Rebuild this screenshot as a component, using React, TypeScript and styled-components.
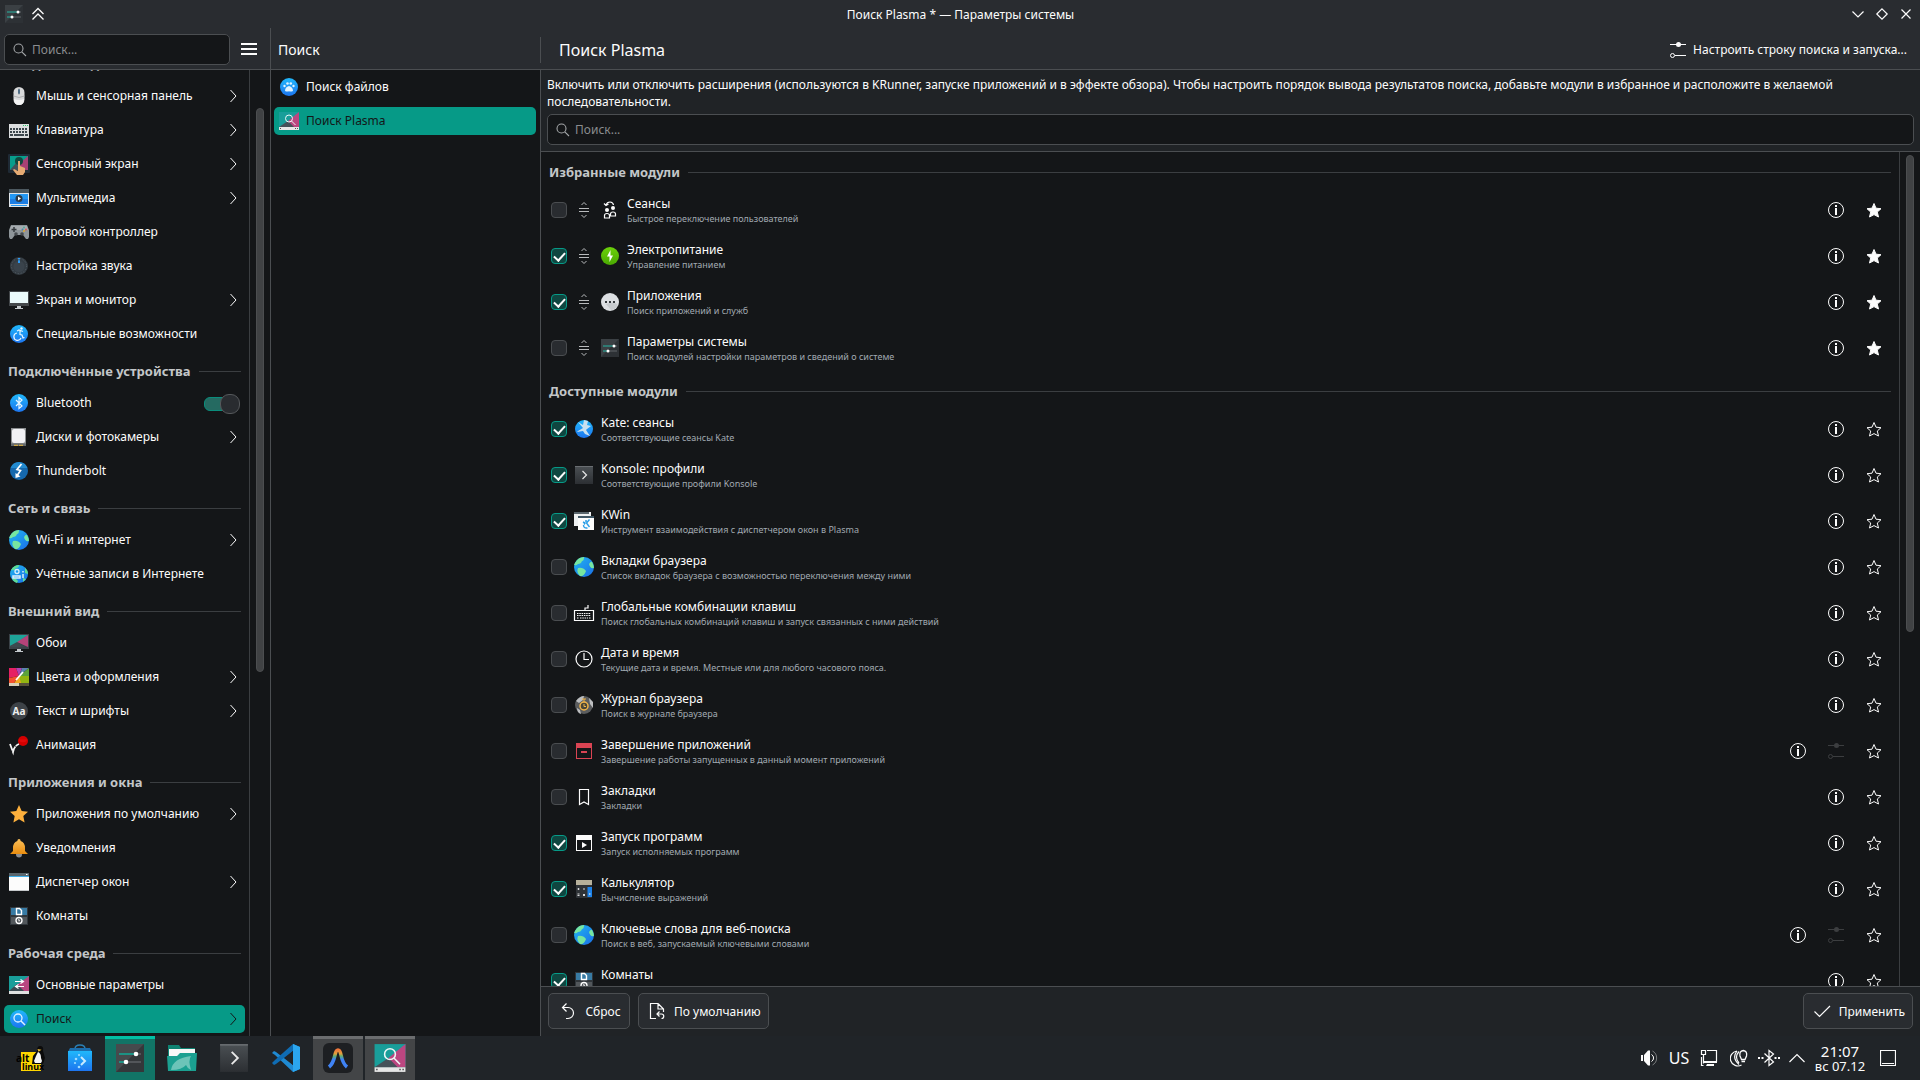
import React, { useState } from 'react';
import styled, { createGlobalStyle, css } from 'styled-components';

const c = {
  header: '#292c30',
  window: '#202326',
  view: '#141618',
  line: '#4b4e51',
  soft: '#3b3e41',
  text: '#fcfcfc',
  dim: '#a1a9b1',
  heading: '#c3c6c8',
  accent: '#069a87',
};

const GlobalStyle = createGlobalStyle`
  * { box-sizing: border-box; }
  body {
    margin: 0;
    background: ${c.window};
    color: ${c.text};
    font: 12px/17px "Noto Sans", "Open Sans", sans-serif;
    overflow: hidden;
  }
  ul { list-style: none; margin: 0; padding: 0; }
  h1, h2, h3, p { margin: 0; font: inherit; }
  button, input { font: inherit; color: inherit; }
  a { color: inherit; text-decoration: none; }
  svg { display: block; flex: none; }
`;

/* ---------- layout ---------- */

const Screen = styled.div`
  height: 100vh;
  display: flex;
  flex-direction: column;
`;

const TitleBar = styled.header`
  display: grid;
  grid-template-columns: 1fr auto 1fr;
  align-items: center;
  height: 28px;
  flex: none;
  padding: 0 2px 0 3px;
  background: ${c.header};
`;

const TitleLeft = styled.div`
  display: flex;
  align-items: center;
  gap: 5px;
`;

const TitleRight = styled.div`
  display: flex;
  justify-content: flex-end;
`;

const TitleText = styled.h1``;

const FlatButton = styled.button<{ $size: number }>`
  display: flex;
  align-items: center;
  justify-content: center;
  width: ${p => p.$size}px;
  height: ${p => p.$size}px;
  padding: 0;
  border: 0;
  border-radius: 4px;
  background: transparent;
`;

const Body = styled.div`
  flex: 1;
  min-height: 0;
  display: flex;
`;

const SideColumn = styled.section`
  flex: none;
  width: 271px;
  display: flex;
  flex-direction: column;
  border-right: 1px solid ${c.line};
  background: ${c.view};
`;

const SubColumn = styled(SideColumn)`
  width: 269px;
  border-right: 0;
`;

const MainColumn = styled.main`
  flex: 1;
  min-width: 0;
  display: flex;
  flex-direction: column;
`;

const Bar = styled.div`
  flex: none;
  display: flex;
  align-items: center;
  height: 42px;
  padding: 2px 5px 0 4px;
  gap: 3px;
  background: ${c.header};
  border-bottom: 1px solid ${c.line};
`;

const SubTitle = styled.h2`
  padding: 0 3px;
  font-size: 14px;
`;

const MainBar = styled(Bar)`
  padding: 2px 8px 0 0;
  justify-content: space-between;
`;

const MainTitle = styled.h2`
  padding: 0 18px;
  border-left: 1px solid ${c.line};
  font-size: 16px;
  line-height: 26px;
`;

const ToolButton = styled.button`
  display: flex;
  align-items: center;
  gap: 7px;
  height: 32px;
  padding: 0 5px;
  border: 0;
  background: transparent;
`;

const SearchBox = styled.label`
  flex: 1;
  display: flex;
  align-items: center;
  gap: 4px;
  height: 31px;
  padding: 0 7px;
  border: 1px solid ${c.line};
  border-radius: 5px;
  background: ${c.view};
`;

const SearchInput = styled.input`
  flex: 1;
  min-width: 0;
  padding: 0;
  border: 0;
  outline: 0;
  background: transparent;
  &::placeholder { color: #8a8d8f; opacity: 1; }
`;

const Scroller = styled.div`
  flex: 1;
  min-height: 0;
  display: flex;
  background: ${c.view};
`;

const ScrollContent = styled.div<{ $end?: boolean }>`
  flex: 1;
  min-width: 0;
  overflow: hidden;
  display: flex;
  flex-direction: column;
  justify-content: ${p => (p.$end ? 'flex-end' : 'flex-start')};
`;

const ScrollTrack = styled.div<{ $before: number; $handle: number; $after: number }>`
  flex: none;
  width: 21px;
  padding: 3px 6px;
  border-left: 1px solid ${c.soft};
  display: grid;
  grid-template-rows: ${p => `${p.$before}fr ${p.$handle}fr ${p.$after}fr`};
`;

const ScrollHandle = styled.div`
  grid-row: 2;
  width: 8px;
  border-radius: 4px;
  background: #404244;
  border: 1px solid #4c4e50;
`;

const GroupTitle = styled.h3`
  flex: none;
  display: flex;
  align-items: center;
  gap: 8px;
  height: 35px;
  padding: 6px 8px 0;
  color: ${c.heading};
  font-size: 13px;
  font-weight: 700;
  &::after {
    content: '';
    flex: 1;
    height: 1px;
    background: ${c.soft};
  }
`;

const NavList = styled.ul<{ $inset?: number }>`
  flex: none;
  padding: 0 4px 0 ${p => p.$inset ?? 4}px;
`;

const NavRow = styled.li<{ $active?: boolean }>`
  display: flex;
  align-items: center;
  height: 28px;
  margin: 3px 0 6px;
  &:last-child { margin-bottom: 3px; }
  padding: 0 4px;
  border-radius: 5px;
  ${p => p.$active && css`background: ${c.accent}; color: ${c.view};`}
`;

const NavLink = styled.a`
  flex: 1;
  display: flex;
  align-items: center;
  gap: 6px;
  white-space: nowrap;
`;

const NavLabel = styled.span`
  flex: 1;
  padding-bottom: 2px;
`;

const Toggle = styled.input`
  appearance: none;
  display: grid;
  align-items: center;
  width: 36px;
  height: 18px;
  margin: 0 1px 0 0;
  &::before, &::after { content: ''; grid-area: 1 / 1; }
  &::before {
    width: 32px;
    height: 12px;
    border: 1px solid #0a8d7c;
    border-radius: 6px;
    background: #256a61;
  }
  &::after {
    justify-self: end;
    width: 18px;
    height: 18px;
    border: 1px solid #55585b;
    border-radius: 9px;
    background: #292c30;
  }
`;

const Intro = styled.div`
  flex: none;
  display: flex;
  flex-direction: column;
  gap: 4px;
  padding: 6px;
  border-bottom: 1px solid ${c.line};
  background: ${c.window};
`;

const IntroSearch = styled(SearchBox)`
  flex: none;
`;

const Framed = styled.div`
  flex: 1;
  min-height: 0;
  display: flex;
  flex-direction: column;
  border-left: 1px solid ${c.line};
`;

const ModuleRow = styled.li`
  display: flex;
  align-items: center;
  gap: 6px;
  height: 46px;
  padding: 0 8px 0 10px;
`;

const Check = styled.input`
  appearance: none;
  flex: none;
  display: grid;
  justify-content: center;
  width: 16px;
  height: 16px;
  margin: 0;
  border: 1px solid #4a4d50;
  border-radius: 4px;
  background: #292c30;
  &:checked {
    border-color: ${c.accent};
    background: #0f4640;
  }
  &:checked::after {
    content: '';
    width: 5px;
    height: 9px;
    margin-top: 1px;
    border: solid ${c.text};
    border-width: 0 2px 2px 0;
    transform: rotate(42deg);
  }
`;

const ModuleText = styled.label`
  flex: 1;
  display: flex;
  flex-direction: column;
  padding-top: 1px;
`;

const ModuleSub = styled.span`
  font-size: 9px;
  line-height: 14px;
  color: ${c.dim};
`;

const Actions = styled.div`
  display: flex;
  gap: 4px;
`;

const Footer = styled.footer`
  flex: none;
  display: flex;
  gap: 8px;
  height: 50px;
  padding: 6px 7px;
  border-top: 1px solid ${c.line};
  background: ${c.window};
`;

const PushButton = styled.button<{ $right?: boolean }>`
  display: flex;
  align-items: center;
  justify-content: center;
  gap: 6px;
  min-width: 82px;
  height: 36px;
  padding: 0 7px;
  margin-left: ${p => (p.$right ? 'auto' : '0')};
  border: 1px solid ${c.line};
  border-radius: 5px;
  background: ${c.header};
`;

const Panel = styled.nav`
  flex: none;
  display: flex;
  justify-content: space-between;
  height: 44px;
  padding-left: 5px;
  background: #202428;
`;

const Tasks = styled.div`
  display: flex;
  gap: 2px;
`;

const Task = styled.button<{ $state?: 'active' | 'open'; $narrow?: boolean }>`
  display: flex;
  align-items: center;
  justify-content: center;
  width: ${p => (p.$narrow ? 46 : 50)}px;
  padding: 0;
  border: 0;
  border-top: 3px solid transparent;
  border-bottom: 3px solid transparent;
  background: transparent;
  ${p => p.$state === 'active' && css`background: #117466; border-color: #02bfa4 transparent #117466;`}
  ${p => p.$state === 'open' && css`background: #434547; border-color: #6b6d6f transparent #434547;`}
`;

const Tray = styled.div`
  display: flex;
  align-items: center;
  padding-right: 17px;
`;

const TrayButton = styled(FlatButton)`
  font-size: 16px;
`;

const Clock = styled.time`
  width: 60px;
  margin-right: 3px;
  display: flex;
  flex-direction: column;
  align-items: center;
  font-size: 13px;
  line-height: 14px;
`;

const ClockTime = styled.span`
  font-size: 15px;
  line-height: 16px;
`;

/* ---------- icons ---------- */

const Defs = styled.svg`
  position: absolute;
  width: 0;
  height: 0;
`;

const Gradients = () => (
  <Defs aria-hidden="true">
    <defs>
      <linearGradient id="blue" x1="0" y1="0" x2="0" y2="1"><stop offset="0" stopColor="#20b8fb" /><stop offset="1" stopColor="#1d75ef" /></linearGradient>
      <linearGradient id="ocean" x1="0" y1="0" x2="1" y2="1"><stop offset="0" stopColor="#21b6f0" /><stop offset="1" stopColor="#1a6fe8" /></linearGradient>
      <linearGradient id="green" x1="0" y1="0" x2="0" y2="1"><stop offset="0" stopColor="#6cd20a" /><stop offset="1" stopColor="#4aa902" /></linearGradient>
      <linearGradient id="slate" x1="0" y1="0" x2="0" y2="1"><stop offset="0" stopColor="#4b5054" /><stop offset="1" stopColor="#2c2f33" /></linearGradient>
      <linearGradient id="gold" x1="0" y1="0" x2="0" y2="1"><stop offset="0" stopColor="#fbc05a" /><stop offset="1" stopColor="#ea8d0f" /></linearGradient>
      <linearGradient id="rainbow" x1="0" y1="0" x2="0" y2="1"><stop offset="0" stopColor="#f0793b" /><stop offset=".22" stopColor="#e2a13c" /><stop offset=".36" stopColor="#5fae72" /><stop offset=".55" stopColor="#3f83f5" /><stop offset="1" stopColor="#3f83f5" /></linearGradient>
    </defs>
  </Defs>
);

const art: Record<string, React.ReactNode> = {
  mouse: <><rect x="5.500" y="2" width="11" height="18" rx="5.500" fill="#d9dadb" /><path d="M11 2v8M5.500 11q5.500 3 11 0" stroke="#aeb0b2" fill="none" /><rect x="10" y="4" width="2" height="5" rx="1" fill="#4f6d86" /><path d="M6 14q0 6 5 6t5-6q-5 2-10 0z" fill="#f4f4f4" /></>,
  keyboard: <><rect x="1" y="5" width="20" height="14" fill="#dcdedf" /><path d="M15 6.500h5" stroke="#31c86e" strokeDasharray="1 1" /><path d="M2 10h18M2 13h18" stroke="#3c464c" strokeWidth="2" strokeDasharray="2 1" /><path d="M2 16h3M6 16h10M17 16h3" stroke="#3c464c" strokeWidth="2" /></>,
  touch: <><rect x="0" y="1" width="22" height="19" rx="1" fill="#1f2a35" /><path d="M2 3h18v14H2z" fill="#079e8c" /><path d="M20 3v14h-6l-3-6z" fill="#a84075" /><path d="M2 17l6-7 5 7z" fill="#41525a" /><circle cx="11" cy="8" r="4" fill="#10493f" /><path d="M10 8h2v5l5 2v4l-2 3H9l-4-5 1-1 4 2z" fill="#e5aa73" /></>,
  media: <><rect x="1" y="2" width="20" height="18" fill="#dfe4e8" /><rect x="1" y="2" width="20" height="4" fill="#4d5960" /><rect x="2" y="7" width="18" height="10" fill="#2398f4" /><path d="M2 12h18v5H2z" fill="#1c7de2" /><circle cx="11" cy="11.500" r="3.500" fill="#2c3b48" /><path d="M10 9.500l3 2-3 2z" fill="#fff" /><path d="M3 18.500h16" stroke="#2398f4" /></>,
  gamepad: <><path d="M3 4h16l2 5v7l-1 2h-2l-3-4H7l-3 4H2l-1-2V9z" fill="#8e9599" /><path d="M3 5h16l1 4H2z" fill="#a7acb0" /><path d="M6 6v5M3.500 8.500h5" stroke="#363b3f" strokeWidth="1.500" /><circle cx="8" cy="13" r="1.800" fill="#454a4e" /><circle cx="14" cy="13" r="1.800" fill="#454a4e" /><circle cx="16" cy="6.500" r="1" fill="#5a9" /><circle cx="14.500" cy="8.500" r="1" fill="#48a" /><circle cx="18" cy="8.500" r="1" fill="#d55" /><circle cx="16" cy="10" r="1" fill="#da3" /></>,
  sound: <><circle cx="11" cy="11" r="9" fill="#343c43" /><circle cx="11" cy="11" r="7.500" fill="none" stroke="#566068" strokeDasharray="1 2" /><circle cx="11" cy="11.500" r="5.500" fill="#3a434b" /><path d="M11 3v5" stroke="#2d9bf5" strokeWidth="2" strokeDasharray="1.500 .8 3" /></>,
  screen: <><rect x="1" y="2" width="20" height="15" fill="#44484b" /><rect x="2" y="3" width="18" height="11" fill="#eafafb" /><path d="M9 17h4v2h2v1H7v-1h2z" fill="#c4c9cc" /></>,
  access: <><circle cx="11" cy="11" r="9" fill="url(#blue)" /><path d="M12 7v4.500l2 .5 1 3 1.500-.5M9 8l2-1 4 1.500M13 15a3.700 3.700 0 11-4-5" fill="none" stroke="#e8f6ff" strokeWidth="1.200" /><circle cx="13.500" cy="5.500" r="1.200" fill="#e8f6ff" /></>,
  bluetooth: <><circle cx="11" cy="11" r="9" fill="url(#blue)" /><path d="M8 8l6 6-3 2.500v-11L14 8l-6 6" fill="none" stroke="#e8f6ff" strokeWidth="1.200" /></>,
  disk: <><rect x="3" y="2" width="15" height="18" fill="#8b8e90" /><rect x="4" y="3" width="13" height="14" rx="2" fill="#f1f1f4" /><path d="M3 17.500h15v2.500H3z" fill="#63686b" /><path d="M6 19.300h10" stroke="#e7b53b" strokeDasharray="4 1" /></>,
  thunder: <><circle cx="11" cy="11" r="9" fill="#1568ad" /><path d="M2.500 8a9 9 0 0117 0z" fill="#238bd0" /><path d="M13.500 4L9 9.500l3.500 1-4 6" fill="none" stroke="#fff" strokeWidth="1.700" /><path d="M7.500 13v5l5-1.500z" fill="#fff" /></>,
  globe: <><circle cx="11" cy="11" r="10" fill="url(#ocean)" /><path d="M2 7q3-6 9-6 0 4-2 4-1 3-4 3-2 2-4 1zM5 12q5-1 8 3-2 6-6 5-4-4-2-8zM16 8q2-3 3-2 2 3 2 6-4 1-5-4z" fill="#77e6a0" /></>,
  accounts: <><circle cx="11" cy="11" r="9" fill="url(#ocean)" /><path d="M3 7q3-5 8-5 0 3-3 3-1 3-5 2zM4 15q4 0 6 3l-1 2q-4-1-5-5zM17 5q3 2 3 6l-3-1zM15 15l3 1-3 3z" fill="#5fdc94" /><circle cx="9" cy="8.500" r="2" fill="none" stroke="#dcf1fb" strokeWidth="1.300" /><path d="M5 15v-2h7v2zM15 11v4M15 8v1.500" fill="none" stroke="#dcf1fb" strokeWidth="1.500" /></>,
  wallpaper: <><rect x="1" y="2" width="20" height="15" fill="#3b4248" /><path d="M2 3h18L9 11 2 14z" fill="#1ea398" /><path d="M20 3v12L9 10z" fill="#b54379" /><path d="M2 14l7-4 8 5H2z" fill="#3e494f" /><path d="M9 17h4v2h2v1H7v-1h2z" fill="#c4c9cc" /></>,
  colors: <><path d="M1 2h7l3 8-10 2z" fill="#e62064" /><path d="M8 2h6l-3 8z" fill="#b046b5" /><path d="M14 2h7l-10 8z" fill="#5b83b0" /><path d="M21 2v8H11z" fill="#5ca23c" /><path d="M21 10v7H11l0-7z" fill="#93b512" /><path d="M11 10l2 7H6z" fill="#f2a820" /><path d="M1 12l10-2-5 7H1z" fill="#f4522f" /><path d="M15 6l-7 8" stroke="#fff" strokeWidth="1.800" /><path d="M1 17h20v3H1z" fill="#d8d0b8" /><path d="M11 17h10v3H11z" fill="#57513a" /></>,
  fonts: <><circle cx="11" cy="11" r="9" fill="#3d4247" /><text x="11" y="14.500" fontSize="10" fontWeight="700" textAnchor="middle" fill="#eceded">Aa</text></>,
  motion: <><circle cx="15" cy="7" r="5" fill="#d40000" /><path d="M10.500 5.500a5 5 0 009 0z" fill="#f01414" opacity=".5" /><path d="M2 10l3 8q1-6 6-8" fill="none" stroke="#f4f4f4" strokeWidth="1.800" strokeDasharray="7 .6" /></>,
  star: <path d="M11 2l2.700 6 6.300.7-4.700 4.300 1.300 6.500L11 16.300 5.400 19.500l1.300-6.500L2 8.700 8.300 8z" fill="#fdb03c" />,
  bell: <><circle cx="11" cy="17.500" r="3" fill="#8b8e92" /><path d="M11 2q1.500 0 1.700 2Q17 5.500 17 11v3l3 3H2l3-3v-3q0-5.500 4.300-7Q9.500 2 11 2z" fill="url(#gold)" /></>,
  windows: <><rect x="1" y="2" width="20" height="18" fill="#fcfcfc" /><rect x="1" y="2" width="20" height="4" fill="#59656c" /><path d="M1 5.500h20" stroke="#3daee9" /><path d="M1 19.500h20" stroke="#c5c8ca" /><path d="M18 3.500h1.500" stroke="#fff" /></>,
  activities: <><rect x="2" y="2" width="18" height="18" fill="#30363b" /><rect x="3" y="3" width="16" height="7" fill="#387ba4" /><rect x="3" y="12" width="16" height="7" fill="#52575b" /><path d="M8.500 3.500h3l2 2v4h-5z" fill="none" stroke="#fff" strokeWidth="1.400" /><circle cx="11" cy="15.500" r="3" fill="none" stroke="#fff" strokeWidth="1.300" /><path d="M10 14l2 1-1 2z" fill="#fff" /></>,
  general: <><path d="M1 2h20v15H1z" fill="#199e9a" /><path d="M21 2v15h-6l-6-6z" fill="#b94680" /><path d="M1 17l8-7 7 7z" fill="#3e4c54" /><path d="M1 17h20v3H1z" fill="#dfe0e0" /><path d="M7 7.500h8M8 12.500h8M12.500 5.500l3 2-3 2M10.500 10.500l-3 2 3 2" stroke="#fff" fill="none" strokeWidth="1.200" /></>,
  find: <><circle cx="11" cy="11" r="9" fill="url(#blue)" /><circle cx="10" cy="10" r="4" fill="none" stroke="#dff2ff" strokeWidth="1.300" /><path d="M13 13l4 4" stroke="#dff2ff" strokeWidth="1.400" /></>,
  paw: <><circle cx="11" cy="11" r="9" fill="url(#blue)" /><g fill="#e1f3fe"><path d="M11 10q4 1 4 5-2 1-4 .3-2 .7-4-.3 0-4 4-5z" /><circle cx="9.500" cy="7.500" r="1.300" /><circle cx="12.800" cy="7.500" r="1.300" /><circle cx="6.500" cy="10" r="1.200" /><circle cx="15.500" cy="10" r="1.200" /></g></>,
  plasma: <><path d="M1 2h20v15H1z" fill="#199e9a" /><path d="M21 2v15h-6l-5-6z" fill="#bb4680" /><path d="M1 17l9-6 6 6z" fill="#465159" /><path d="M1 17h20v3H1z" fill="#e7e7e7" /><path d="M2 18.500h1M17 18.500h3" stroke="#555" strokeDasharray="1 1" /><circle cx="11" cy="8.500" r="3.500" fill="none" stroke="#eef7f7" strokeWidth="1" /><path d="M13.500 11l4 4" stroke="#eef7f7" strokeWidth="1" /></>,
  settings: <><rect x="2" y="2" width="18" height="18" fill="#3b4044" /><path d="M2 20L20 2v18z" fill="#2d3135" /><path d="M4 9h14M4 14h14" stroke="#62676b" /><path d="M4 9h10M4 14h5" stroke="#12a18f" /><circle cx="15" cy="9" r="1.500" fill="#fff" /><circle cx="9" cy="14" r="1.500" fill="#fff" /></>,
  users: <g fill="#fcfcfc"><circle cx="8" cy="11" r="2" /><circle cx="14" cy="9" r="2" /><path d="M5.500 19v-2.500q0-2 2.500-2t2.500 2V19zM11.500 17v-2q0-2 2.500-2t2.500 2v2z" fill="none" stroke="#fcfcfc" strokeWidth="1.200" /><path d="M14.500 6Q14 3 11 3 8 3 7 6M5 4.500l2 2 2.500-1.500" fill="none" stroke="#fcfcfc" strokeWidth="1.200" /></g>,
  power: <><circle cx="11" cy="11" r="9" fill="url(#green)" /><path d="M11.500 5L8 11.500h2.500V17l3.500-6.500h-2.500z" fill="#fff" /></>,
  apps: <><circle cx="11" cy="11" r="9" fill="#dcdfe2" /><path d="M7 13l5 6 4-1 3-4-4-3z" fill="#c6cacd" /><path d="M6 11h2M10 11h2M14 11h2" stroke="#34393d" strokeWidth="2" /></>,
  kate: <><circle cx="11" cy="11" r="9" fill="url(#blue)" /><path d="M5 4l5 3 1-5 4 1-1 4 4 1-4 3-1 1 4 6-5-2-2-3-6 1 1-1 5-3z" fill="#c9e0ef" /></>,
  konsole: <><rect x="2" y="2" width="18" height="18" fill="url(#slate)" /><path d="M2 2.500h18" stroke="#6a6e72" /><path d="M9.500 7l4 4-4 4" fill="none" stroke="#e8e8e8" strokeWidth="1.200" /></>,
  kwin: <><rect x="1" y="2" width="17" height="14" fill="#eef0f1" /><path d="M1 3h15" stroke="#59656c" strokeWidth="2" /><rect x="5" y="6" width="16" height="14" fill="#fcfcfc" /><path d="M5 7h16" stroke="#3f5664" strokeWidth="2" /><path d="M16.500 9.500l-3 3.500 3 4M10 12l2 1-1 1.500M12 11h2M10.500 15q0 3.500 4 3" fill="none" stroke="#2b9fe8" strokeWidth="1.400" /></>,
  keys: <><path d="M1.500 8.500h19v10h-19zM12 8V6h3V3" fill="none" stroke="#fcfcfc" strokeWidth="1.200" /><path d="M4 11.500h14M4 13.500h14M4 16h2M7 16h8M16 16h2" stroke="#fcfcfc" strokeDasharray="1.500 .8" /></>,
  clock: <><circle cx="11" cy="11" r="8" fill="none" stroke="#fcfcfc" strokeWidth="1.200" /><path d="M11 5v6.500h5" fill="none" stroke="#fcfcfc" strokeWidth="1.200" /></>,
  history: <><circle cx="11" cy="11" r="9" fill="#5a5c5e" /><path d="M3 7q4-5 8-5l-1 4-4 3zM16 4l4 4v6l-3-4zM4 14l3 2 1 4q-4-1-4-6z" fill="#bcbec0" /><circle cx="11" cy="12" r="4" fill="#4a4638" stroke="#f0b44a" strokeWidth="1.500" /><path d="M11 8V5M9 5h4M11 10v2.500h2" stroke="#f0b44a" fill="none" /></>,
  kill: <g fill="#da4453"><path d="M3 3h16v16H3zM4 8v10h14V8z" fillRule="evenodd" /><path d="M8 11h6v2H8z" /></g>,
  bookmark: <path d="M6.500 3.500h9v15l-4.500-2.500-4.500 2.500z" fill="none" stroke="#fcfcfc" strokeWidth="1.200" />,
  run: <g fill="#fcfcfc"><path d="M3 3h16v16H3zM4 8v10h14V8z" fillRule="evenodd" /><path d="M9 10l5 3-5 3z" /></g>,
  calc: <><rect x="3" y="2" width="16" height="18" rx="1" fill="#2f3337" /><rect x="3" y="2" width="16" height="5" fill="#b7b19b" /><path d="M14.500 9h4.500v10h-4.500z" fill="#1d83ea" /><path d="M4.500 11h2M5.500 10v2M10 11h2M4.500 16h2M4.500 17.500h2M10 16l2 2M12 16l-2 2M16.800 15v2" stroke="#d9dadb" /></>,
};

const AppIcon = ({ name, size = 22 }: { name: string; size?: number }) => (
  <svg width={size} height={size} viewBox="0 0 22 22" aria-hidden="true">{art[name]}</svg>
);

const Line = ({ d, size = 16, stroke = 'currentColor', w = 1 }: { d: string; size?: number; stroke?: string; w?: number }) => (
  <svg width={size} height={size} viewBox={`0 0 ${size} ${size}`} fill="none" stroke={stroke} strokeWidth={w} aria-hidden="true">
    <path d={d} />
  </svg>
);

const SearchIcon = () => <Line stroke="#a3a6a8" d="M11 6.500a4.500 4.500 0 11-9 0 4.500 4.500 0 019 0zM9.800 9.800l4.200 4.200" w={1.1} />;
const Chevron = () => <Line d="M5.500 2l5.500 6-5.500 6" w={1} />;
const InfoIcon = () => (
  <svg width="16" height="16" viewBox="0 0 16 16" aria-hidden="true">
    <circle cx="8" cy="8" r="7.500" fill="none" stroke="#fcfcfc" />
    <path d="M7 3h2v2H7zM7 6h2v7H7z" fill="#fcfcfc" />
  </svg>
);
const StarIcon = ({ filled }: { filled: boolean }) => (
  <svg width="16" height="16" viewBox="0 0 16 16" aria-hidden="true">
    <path d="M8 1.500l2 4.700 5 .5-3.700 3.300 1.200 5L8 12.600 3.500 15l1.200-5L1 6.700l5-.5z" fill={filled ? '#fcfcfc' : 'none'} stroke="#fcfcfc" />
  </svg>
);
const SlidersIcon = ({ color = '#fcfcfc' }: { color?: string }) => (
  <svg width="16" height="16" viewBox="0 0 16 16" fill="none" stroke={color} aria-hidden="true">
    <path d="M0 2.500h16M5 13.500h11" />
    <circle cx="8.500" cy="2.500" r="2.500" fill={color} stroke="none" />
    <circle cx="2.500" cy="13.500" r="2" />
  </svg>
);
const DragIcon = () => (
  <svg width="20" height="18" viewBox="0 0 20 18" fill="none" stroke="#b9bbbd" aria-hidden="true">
    <path d="M6 7.500h10M6 10.500h10M8.500 4l2.500-2.500L13.500 4M8.500 14l2.500 2.500 2.500-2.500" />
  </svg>
);

const AltIcon = () => (
  <svg width="34" height="32" viewBox="0 0 34 32" aria-hidden="true">
    <rect x="8" y="10" width="20" height="19" fill="#ffd600" />
    <path d="M27 4q4 0 3 5l2 7-2 6H19l1-8 4-5q0-5 3-5z" fill="#0b0b0b" />
    <path d="M25 10q3 1 3 6l1 3-1 2h-6l-1-2 2-5z" fill="#f5f5f5" />
    <path d="M24.500 7l4 .7-3 2z" fill="#e8b93a" />
    <text x="3" y="20" fontSize="10" fontWeight="700" fill="#000">alt</text>
    <text x="9" y="28" fontSize="9" fontWeight="700" fill="#000">linux</text>
  </svg>
);
const BagIcon = () => (
  <svg width="32" height="32" viewBox="0 0 32 32" aria-hidden="true">
    <path d="M11 9V7q0-4 5-4t5 4v2" fill="none" stroke="#2b7fb4" strokeWidth="1.500" />
    <path d="M6 6h20l2 4H4z" fill="#1c6eae" />
    <path d="M4 9h24v20H4z" fill="url(#blue)" />
    <path d="M17 15l4 4-4 4" fill="none" stroke="#c8eaff" strokeWidth="2" />
    <g fill="#9fdcff"><circle cx="12" cy="17" r="1.300" /><circle cx="11" cy="21" r="1.100" /><circle cx="15" cy="25" r="1.300" /><circle cx="15" cy="13" r="1" /></g>
  </svg>
);
const PanelSettings = () => (
  <svg width="28" height="28" viewBox="0 0 28 28" aria-hidden="true">
    <rect width="28" height="28" fill="#464a4d" />
    <path d="M0 28L28 0v28z" fill="#2c2f32" opacity=".7" />
    <path d="M3 10h22M3 18h22" stroke="#5e6265" strokeWidth="1.600" />
    <path d="M3 10h16M3 18h7" stroke="#0ba491" strokeWidth="1.600" />
    <circle cx="20" cy="10" r="2.300" fill="#fff" /><circle cx="10" cy="18" r="2.300" fill="#fff" />
  </svg>
);
const FolderIcon = () => (
  <svg width="32" height="32" viewBox="0 0 32 32" aria-hidden="true">
    <path d="M2 3h11l2 3h14v10H2z" fill="#0e8272" />
    <path d="M3 7h26v9H3z" fill="#f7f7f7" />
    <path d="M1 14h10l3-3h17l-1 18H2z" fill="#1ba091" />
    <path d="M5 28q2-12 20-14-3 4 0 14-4-2-5-5-4 5-15 5z" fill="#6cc4b8" />
  </svg>
);
const VsCodeIcon = () => (
  <svg width="28" height="28" viewBox="0 0 28 28" aria-hidden="true">
    <path d="M21 0l7 3v22l-7 3L3 11l-3-2 2-2 2 1 17 13V7z" fill="#1f8ad2" />
    <path d="M21 0v7L4 20l-2 1-2-2 3-3z" fill="#0f6cb3" />
    <path d="M21 0l7 3v22l-7 3z" fill="#2ba6ef" />
    <path d="M21 7v14l-8-7z" fill="#202428" />
  </svg>
);
const ArcIcon = () => (
  <svg width="30" height="30" viewBox="0 0 30 30" aria-hidden="true">
    <rect width="30" height="30" rx="6" fill="#1d1f22" />
    <path d="M6 24Q10 21 12 12q1-5 3-5t3 5q2 9 6 12" fill="none" stroke="url(#rainbow)" strokeWidth="3.600" />
  </svg>
);
const VolumeIcon = () => (
  <svg width="18" height="18" viewBox="0 0 18 18" fill="none" stroke="#fcfcfc" aria-hidden="true">
    <path d="M1 6v6h2V6zM4 6l4-4.500h2v15H8L4 12z" fill="#fcfcfc" stroke="none" />
    <path d="M11.500 5.500a4 4 0 010 7" /><path d="M12.500 2a8 8 0 010 14" opacity=".4" />
  </svg>
);
const NetworkIcon = () => (
  <svg width="18" height="18" viewBox="0 0 18 18" fill="none" stroke="#fcfcfc" aria-hidden="true">
    <path d="M1.500 1.500h4v4h-4zM3.500 5.500v9M1.500 8v8.500h2M7 1.500h9.500v11h-9" strokeWidth="1.200" />
    <path d="M4 12h13v2H4zM7 15h7v2H6z" fill="#fcfcfc" stroke="none" />
  </svg>
);
const NightIcon = () => (
  <svg width="18" height="18" viewBox="0 0 18 18" fill="none" stroke="#fcfcfc" aria-hidden="true">
    <path d="M7 2a7.500 7.500 0 104.500 14M7 2Q1.500 9 9 15.500M9 2.500Q4 8 9 14" strokeWidth="1.200" />
    <path d="M11.500 10.500L10 7q-1-5 3.300-5.500Q17.500 2 16.500 7L15 10.500zM11.500 12.500h3.500" strokeWidth="1.300" />
  </svg>
);
const TrayBluetooth = () => (
  <svg width="22" height="18" viewBox="0 0 22 18" fill="none" stroke="#fcfcfc" aria-hidden="true">
    <path d="M6.500 4.500l9 8.500-4.500 3.500v-15L15.500 5l-9 8.500" strokeWidth="1.200" />
    <path d="M0 9h2M3.500 9h2M16.500 9h2M20 9h2" strokeWidth="2" />
  </svg>
);

/* ---------- data ---------- */

type Nav = { icon: string; label: string; more?: boolean; toggle?: boolean; active?: boolean };
const groups: { title: string; items: Nav[] }[] = [
  { title: 'Ввод и вывод', items: [
    { icon: 'mouse', label: 'Мышь и сенсорная панель', more: true },
    { icon: 'keyboard', label: 'Клавиатура', more: true },
    { icon: 'touch', label: 'Сенсорный экран', more: true },
    { icon: 'media', label: 'Мультимедиа', more: true },
    { icon: 'gamepad', label: 'Игровой контроллер' },
    { icon: 'sound', label: 'Настройка звука' },
    { icon: 'screen', label: 'Экран и монитор', more: true },
    { icon: 'access', label: 'Специальные возможности' },
  ] },
  { title: 'Подключённые устройства', items: [
    { icon: 'bluetooth', label: 'Bluetooth', toggle: true },
    { icon: 'disk', label: 'Диски и фотокамеры', more: true },
    { icon: 'thunder', label: 'Thunderbolt' },
  ] },
  { title: 'Сеть и связь', items: [
    { icon: 'globe', label: 'Wi-Fi и интернет', more: true },
    { icon: 'accounts', label: 'Учётные записи в Интернете' },
  ] },
  { title: 'Внешний вид', items: [
    { icon: 'wallpaper', label: 'Обои' },
    { icon: 'colors', label: 'Цвета и оформления', more: true },
    { icon: 'fonts', label: 'Текст и шрифты', more: true },
    { icon: 'motion', label: 'Анимация' },
  ] },
  { title: 'Приложения и окна', items: [
    { icon: 'star', label: 'Приложения по умолчанию', more: true },
    { icon: 'bell', label: 'Уведомления' },
    { icon: 'windows', label: 'Диспетчер окон', more: true },
    { icon: 'activities', label: 'Комнаты' },
  ] },
  { title: 'Рабочая среда', items: [
    { icon: 'general', label: 'Основные параметры' },
    { icon: 'find', label: 'Поиск', more: true, active: true },
  ] },
];

type Module = { icon: string; title: string; sub: string; on?: boolean; config?: boolean };
const favourites: Module[] = [
  { icon: 'users', title: 'Сеансы', sub: 'Быстрое переключение пользователей' },
  { icon: 'power', title: 'Электропитание', sub: 'Управление питанием', on: true },
  { icon: 'apps', title: 'Приложения', sub: 'Поиск приложений и служб', on: true },
  { icon: 'settings', title: 'Параметры системы', sub: 'Поиск модулей настройки параметров и сведений о системе' },
];
const available: Module[] = [
  { icon: 'kate', title: 'Kate: сеансы', sub: 'Соответствующие сеансы Kate', on: true },
  { icon: 'konsole', title: 'Konsole: профили', sub: 'Соответствующие профили Konsole', on: true },
  { icon: 'kwin', title: 'KWin', sub: 'Инструмент взаимодействия с диспетчером окон в Plasma', on: true },
  { icon: 'globe', title: 'Вкладки браузера', sub: 'Список вкладок браузера с возможностью переключения между ними' },
  { icon: 'keys', title: 'Глобальные комбинации клавиш', sub: 'Поиск глобальных комбинаций клавиш и запуск связанных с ними действий' },
  { icon: 'clock', title: 'Дата и время', sub: 'Текущие дата и время. Местные или для любого часового пояса.' },
  { icon: 'history', title: 'Журнал браузера', sub: 'Поиск в журнале браузера' },
  { icon: 'kill', title: 'Завершение приложений', sub: 'Завершение работы запущенных в данный момент приложений', config: true },
  { icon: 'bookmark', title: 'Закладки', sub: 'Закладки' },
  { icon: 'run', title: 'Запуск программ', sub: 'Запуск исполняемых программ', on: true },
  { icon: 'calc', title: 'Калькулятор', sub: 'Вычисление выражений', on: true },
  { icon: 'globe', title: 'Ключевые слова для веб-поиска', sub: 'Поиск в веб, запускаемый ключевыми словами', config: true },
  { icon: 'activities', title: 'Комнаты', sub: 'Поиск комнат', on: true },
];

/* ---------- parts ---------- */

const NavItem = ({ icon, label, more, toggle, active }: Nav) => {
  const [on, setOn] = useState(true);
  return (
    <NavRow $active={active}>
      <NavLink href="#">
        <AppIcon name={icon} />
        <NavLabel>{label}</NavLabel>
        {more && <Chevron />}
      </NavLink>
      {toggle && <Toggle type="checkbox" aria-label={label} checked={on} onChange={() => setOn(!on)} />}
    </NavRow>
  );
};

const ModuleItem = ({ m, id, fav }: { m: Module; id: string; fav?: boolean }) => {
  const [on, setOn] = useState(!!m.on);
  return (
    <ModuleRow>
      <Check type="checkbox" id={id} checked={on} onChange={() => setOn(!on)} />
      {fav && <DragIcon />}
      <AppIcon name={m.icon} />
      <ModuleText htmlFor={id}>
        <span>{m.title}</span>
        <ModuleSub>{m.sub}</ModuleSub>
      </ModuleText>
      <Actions>
        <FlatButton $size={34} aria-label="Сведения"><InfoIcon /></FlatButton>
        {m.config && <FlatButton $size={34} disabled aria-label="Настроить"><SlidersIcon color="#3c3e40" /></FlatButton>}
        <FlatButton $size={34} aria-label="Избранное"><StarIcon filled={!!fav} /></FlatButton>
      </Actions>
    </ModuleRow>
  );
};

export default function App() {
  return (
    <Screen>
      <GlobalStyle />
      <Gradients />
      <TitleBar>
        <TitleLeft>
          <AppIcon name="settings" />
          <FlatButton $size={16} aria-label="Поверх других окон"><Line d="M2.500 8L8 2.500 13.500 8M2.500 13.500L8 8l5.500 5.500" w={1.3} /></FlatButton>
        </TitleLeft>
        <TitleText>Поиск Plasma * — Параметры системы</TitleText>
        <TitleRight>
          <FlatButton $size={24} aria-label="Свернуть"><Line d="M2.500 5.500l5.500 5.500 5.500-5.500" w={1.2} /></FlatButton>
          <FlatButton $size={24} aria-label="Восстановить"><Line d="M8 2.800l5.200 5.200L8 13.200 2.800 8z" w={1.2} /></FlatButton>
          <FlatButton $size={24} aria-label="Закрыть"><Line d="M3.500 3.500l9 9M12.500 3.500l-9 9" w={1.2} /></FlatButton>
        </TitleRight>
      </TitleBar>
      <Body>
        <SideColumn>
          <Bar>
            <SearchBox>
              <SearchIcon />
              <SearchInput aria-label="Поиск" placeholder="Поиск..." />
            </SearchBox>
            <FlatButton $size={32} aria-label="Меню"><Line d="M0 2h16M0 7h16M0 12h16" w={2} /></FlatButton>
          </Bar>
          <Scroller>
            <ScrollContent $end>
              {groups.map(g => (
                <React.Fragment key={g.title}>
                  <GroupTitle>{g.title}</GroupTitle>
                  <NavList>{g.items.map(i => <NavItem key={i.label} {...i} />)}</NavList>
                </React.Fragment>
              ))}
            </ScrollContent>
            <ScrollTrack $before={35} $handle={564} $after={361}><ScrollHandle /></ScrollTrack>
          </Scroller>
        </SideColumn>
        <SubColumn>
          <Bar><SubTitle>Поиск</SubTitle></Bar>
          <NavList $inset={3}>
            <NavItem icon="paw" label="Поиск файлов" />
            <NavItem icon="plasma" label="Поиск Plasma" active />
          </NavList>
        </SubColumn>
        <MainColumn>
          <MainBar>
            <MainTitle>Поиск Plasma</MainTitle>
            <ToolButton><SlidersIcon />Настроить строку поиска и запуска...</ToolButton>
          </MainBar>
          <Framed>
            <Intro>
              <p>Включить или отключить расширения (используются в KRunner, запуске приложений и в эффекте обзора). Чтобы настроить порядок вывода результатов поиска, добавьте модули в избранное и расположите в желаемой последовательности.</p>
              <IntroSearch>
                <SearchIcon />
                <SearchInput aria-label="Поиск модулей" placeholder="Поиск..." />
              </IntroSearch>
            </Intro>
            <Scroller>
              <ScrollContent>
                <GroupTitle>Избранные модули</GroupTitle>
                <ul>{favourites.map((m, i) => <ModuleItem key={m.title} m={m} id={`fav-${i}`} fav />)}</ul>
                <GroupTitle>Доступные модули</GroupTitle>
                <ul>{available.map((m, i) => <ModuleItem key={m.title} m={m} id={`mod-${i}`} />)}</ul>
              </ScrollContent>
              <ScrollTrack $before={0} $handle={477} $after={351}><ScrollHandle /></ScrollTrack>
            </Scroller>
            <Footer>
              <PushButton><Line size={22} d="M9.500 3.500l-4 4 4 4M6 7.500h5a5.500 5.500 0 010 11H9" w={1.2} />Сброс</PushButton>
              <PushButton><Line size={22} d="M12 3.500H4.500v15H10M12 3.500l5.500 5.500v3M12 3.500V9h5.500M13.500 11.500l-2.500 2.500 2.500 2.500M11 14h4.500a2 2 0 010 4.500" w={1.2} />По умолчанию</PushButton>
              <PushButton $right><Line size={22} d="M3.500 11.500l5 5L19 6" w={1.2} />Применить</PushButton>
            </Footer>
          </Framed>
        </MainColumn>
      </Body>
      <Panel>
        <Tasks>
          <Task aria-label="Меню приложений"><AltIcon /></Task>
          <Task $narrow aria-label="Discover"><BagIcon /></Task>
          <Task $state="active" aria-label="Параметры системы"><PanelSettings /></Task>
          <Task aria-label="Dolphin"><FolderIcon /></Task>
          <Task aria-label="Konsole"><AppIcon name="konsole" size={34} /></Task>
          <Task aria-label="VS Code"><VsCodeIcon /></Task>
          <Task $state="open" aria-label="Antigravity"><ArcIcon /></Task>
          <Task $state="open" aria-label="Поиск Plasma"><AppIcon name="plasma" size={34} /></Task>
        </Tasks>
        <Tray>
          <TrayButton $size={30} aria-label="Громкость"><VolumeIcon /></TrayButton>
          <TrayButton $size={30}>US</TrayButton>
          <TrayButton $size={30} aria-label="Сеть"><NetworkIcon /></TrayButton>
          <TrayButton $size={30} aria-label="Ночная подсветка"><NightIcon /></TrayButton>
          <TrayButton $size={30} aria-label="Bluetooth"><TrayBluetooth /></TrayButton>
          <TrayButton $size={26} aria-label="Показать скрытые значки"><Line d="M.5 12L8 4.500 15.500 12" w={1.2} /></TrayButton>
          <Clock><ClockTime>21:07</ClockTime>вс 07.12</Clock>
          <TrayButton $size={30} aria-label="Показать рабочий стол"><Line d="M.5 .5h15v15H.5zM2 13.500h12" w={1.2} /></TrayButton>
        </Tray>
      </Panel>
    </Screen>
  );
}
